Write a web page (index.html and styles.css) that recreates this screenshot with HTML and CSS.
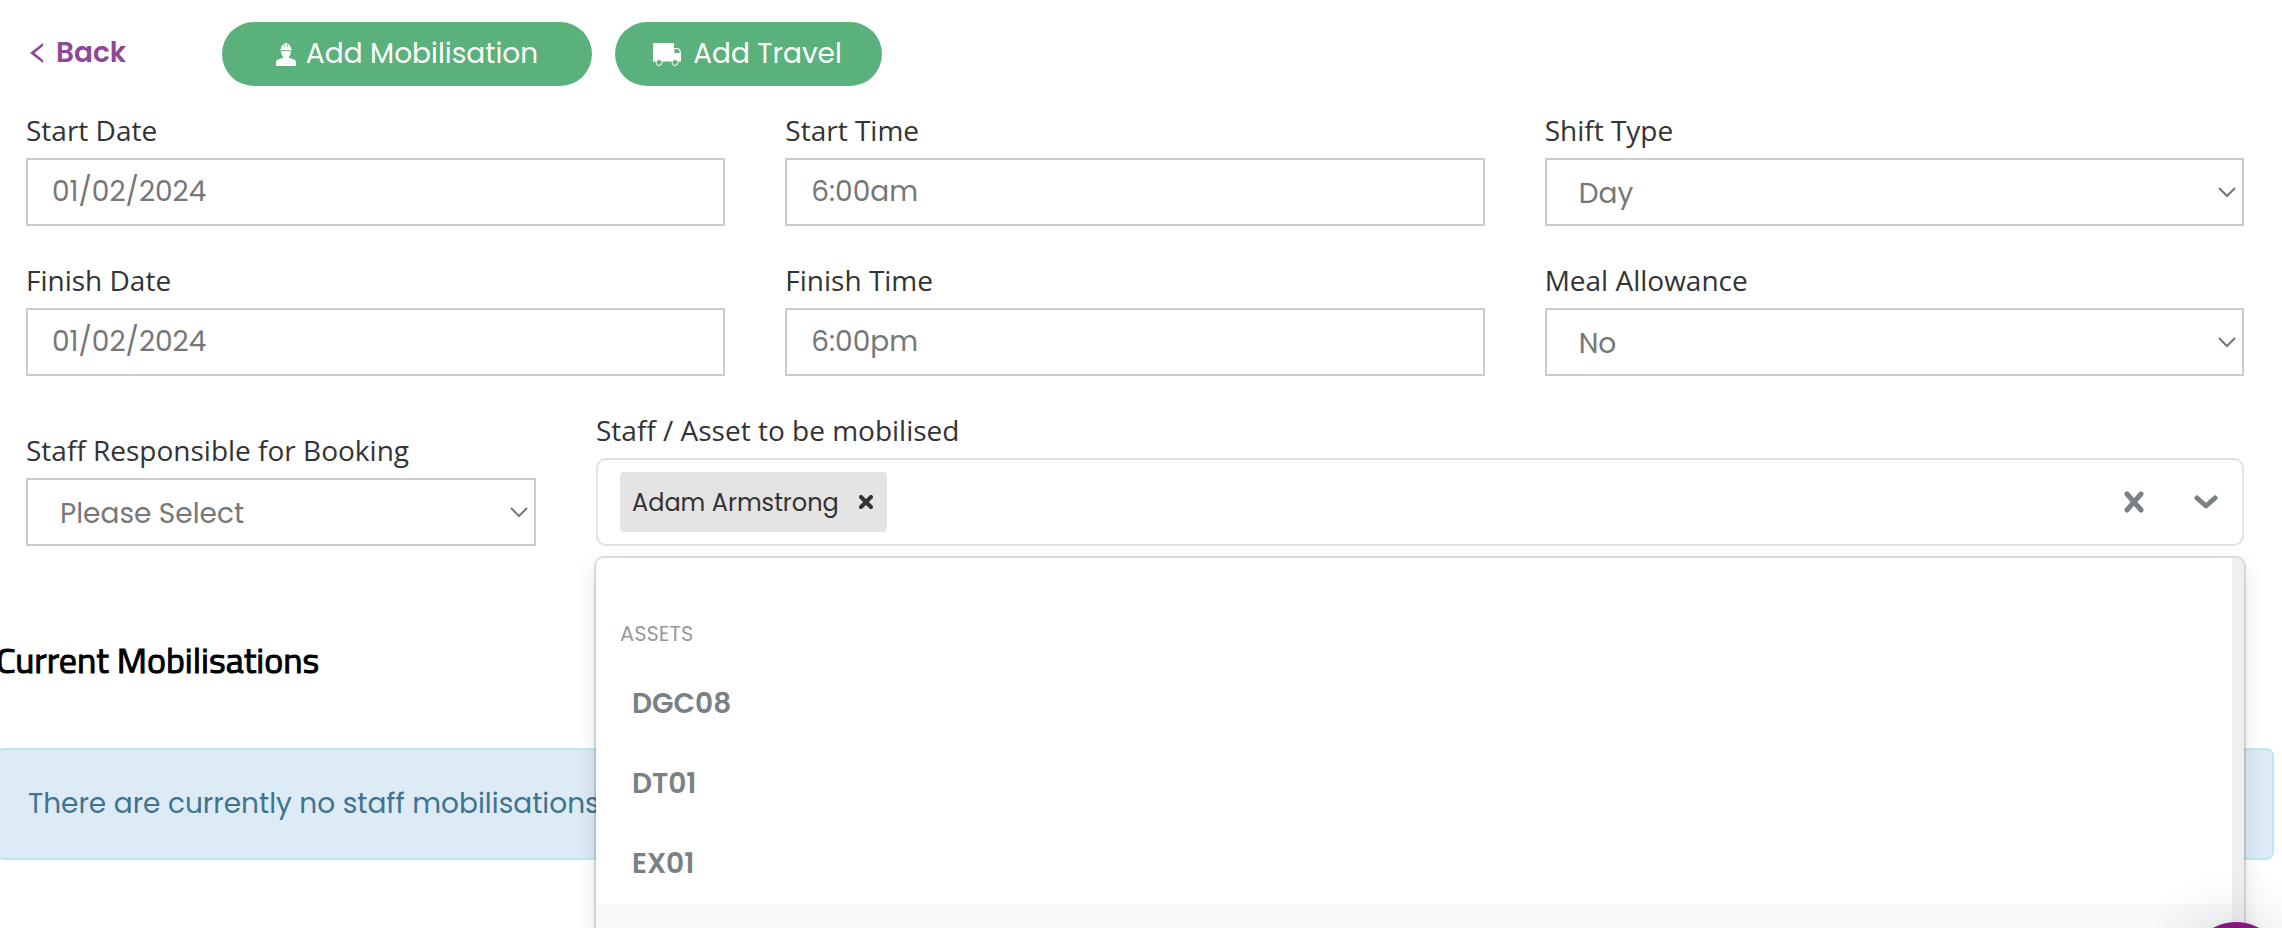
FILE: index.html
```html
<!DOCTYPE html>
<html lang="en">

<head>
  <meta charset="utf-8">
  <meta name="viewport" content="width=device-width, initial-scale=1">
  <title>Mobilisations</title>
  <link rel="stylesheet" href="styles.css">
</head>

<body>

<nav class="toolbar">
  <a href="#" class="back">
    <svg width="14" height="20" viewBox="0 0 14 20"><path d="M13 0v3L4.500 10l8.500 7v3L0 10z" fill="currentColor"/></svg>
    Back
  </a>
  <button type="button" class="btn btn-mobilisation">
    <svg width="20" height="24" viewBox="0 0 20 24" fill="currentColor">
      <path d="M5 7c0-2.500 1.200-4.300 3-5v3h.6V1h2.800v4h.6V2c1.800.7 3 2.500 3 5h1v1.300H4V7z"/>
      <path d="M5 9.300h10c-.2 2.500-.8 4-2 5.200v1.300l5 1.700c1.500.6 2 1.500 2 3V24H0v-3.500c0-1.500.5-2.400 2-3l5-1.700v-1.300C5.800 13.300 5.200 11.800 5 9.300z"/>
    </svg>
    Add Mobilisation
  </button>
  <button type="button" class="btn btn-travel">
    <svg width="28" height="24" viewBox="0 0 28 24">
      <path d="M0 1h21v5h3c2.500 0 4 2 4 5v8.500H0z" fill="currentColor"/>
      <path d="M21.500 7H24c1.500 0 2.600 1.500 2.800 4h-5.300z" fill="#5ab17b"/>
      <circle cx="6" cy="20.500" r="3" fill="#5ab17b" stroke="currentColor"/>
      <circle cx="22" cy="20.500" r="3" fill="#5ab17b" stroke="currentColor"/>
    </svg>
    Add Travel
  </button>
</nav>

<form class="booking">
  <div class="row">
    <div class="field">
      <label for="start-date">Start Date</label>
      <input type="text" id="start-date" value="01/02/2024">
    </div>
    <div class="field">
      <label for="start-time">Start Time</label>
      <input type="text" id="start-time" value="6:00am">
    </div>
    <div class="field">
      <label for="shift-type">Shift Type</label>
      <select id="shift-type"><option>Day</option></select>
    </div>
    <div class="field">
      <label for="finish-date">Finish Date</label>
      <input type="text" id="finish-date" value="01/02/2024">
    </div>
    <div class="field">
      <label for="finish-time">Finish Time</label>
      <input type="text" id="finish-time" value="6:00pm">
    </div>
    <div class="field">
      <label for="meal">Meal Allowance</label>
      <select id="meal"><option>No</option></select>
    </div>
  </div>

  <div class="staff-row">
    <div class="field">
      <label for="responsible">Staff Responsible for Booking</label>
      <select id="responsible"><option>Please Select</option></select>
    </div>
    <div class="field">
      <label for="mobilised">Staff / Asset to be mobilised</label>
      <div class="multi">
        <div class="control">
          <div class="chip">
            Adam Armstrong
            <button type="button" aria-label="Remove Adam Armstrong">
              <svg width="14" height="14" viewBox="0 0 14 14"><path d="m2 2 10 10M12 2 2 12" stroke="currentColor" stroke-width="4" stroke-linecap="round"/></svg>
            </button>
          </div>
          <input type="text" id="mobilised">
          <button type="button" class="clear" aria-label="Clear">
            <svg width="20" height="22" viewBox="0 0 20 22"><path d="m3 3 14 16M17 3 3 19" stroke="currentColor" stroke-width="5" stroke-linecap="round"/></svg>
          </button>
          <button type="button" class="toggle" aria-label="Toggle list">
            <svg width="24" height="16" viewBox="0 0 24 16"><path d="m3 4 9 8 9-8" fill="none" stroke="currentColor" stroke-width="5" stroke-linecap="round" stroke-linejoin="round"/></svg>
          </button>
        </div>
        <div class="menu">
          <div class="group">ASSETS</div>
          <ul>
            <li>DGC08</li>
            <li>DT01</li>
            <li>EX01</li>
            <li class="active"></li>
          </ul>
        </div>
      </div>
    </div>
  </div>
</form>

<section class="current">
  <h2>Current Mobilisations</h2>
  <div class="alert">There are currently no staff mobilisations</div>
</section>

<button type="button" class="chat" aria-label="Open chat"></button>

</body>
</html>
```

FILE: styles.css
```css
* {
  box-sizing: border-box;
}

html {
  height: 100%;
}

body {
  height: 100%;
  margin: 0;
  overflow: hidden;
  background: #fff;
  color: #333;
  font-family: Poppins, Inter, sans-serif;
  font-size: 28px;
}

button,
input,
select {
  font: inherit;
}

button {
  border: 0;
  padding: 0;
  background: none;
  cursor: pointer;
}

/* toolbar */
.toolbar {
  display: flex;
  padding: 22px 30px 0;
}

.back {
  display: flex;
  align-items: center;
  gap: 12px;
  width: 192px;
  height: 62px;
  color: #8c4896;
  font-weight: 600;
  text-decoration: none;
}

.btn {
  display: flex;
  align-items: center;
  justify-content: center;
  gap: 10px;
  height: 64px;
  margin-right: 23px;
  border-radius: 32px;
  background: #5ab17b;
  color: #fff;
}

.btn-mobilisation {
  width: 370px;
}

.btn-travel {
  gap: 12px;
  width: 267px;
  padding-right: 2px;
}

/* form */
.booking {
  padding: 26px 38px 0 26px;
}

.row {
  display: grid;
  grid-template-columns: repeat(3, 1fr);
  gap: 36px 60px;
}

.staff-row {
  display: grid;
  grid-template-columns: 510px 1fr;
  align-items: end;
  gap: 60px;
  margin-top: 36px;
}

.field label {
  display: block;
  height: 46px;
  font-family: "Open Sans", sans-serif;
  line-height: 36px;
}

.field > input,
.field > select {
  display: block;
  width: 100%;
  height: 68px;
  border: 2px solid #ccc;
  border-radius: 0;
  background: #fff;
  color: #777;
}

.field > input {
  padding: 0 24px;
}

.field > select {
  appearance: none;
  padding: 2px 32px 0;
  background: #fff url("data:image/svg+xml,%3Csvg xmlns='http://www.w3.org/2000/svg' width='18' height='11'%3E%3Cpath d='m1 1 8 8 8-8' fill='none' stroke='%23777' stroke-width='2'/%3E%3C/svg%3E") no-repeat right 6px center;
}

/* multi select */
.multi {
  position: relative;
}

.control {
  display: flex;
  align-items: center;
  height: 88px;
  padding: 0 24px 0 22px;
  border: 2px solid #dee2e6;
  border-radius: 10px;
  background: #fff;
}

.chip {
  display: flex;
  align-items: center;
  gap: 20px;
  height: 60px;
  padding: 0 14px 0 12px;
  border-radius: 4px;
  background: #e4e4e4;
  font-size: 24px;
}

.chip button {
  display: flex;
  color: #333;
}

.control input {
  flex: 1;
  min-width: 0;
  border: 0;
  outline: 0;
  background: none;
}

.clear,
.toggle {
  display: flex;
  color: #798184;
}

.toggle {
  margin-left: 50px;
}

.menu {
  position: absolute;
  top: 100px;
  left: 0;
  right: 0;
  z-index: 1;
  height: 600px;
  padding-top: 50px;
  border-right: 12px solid #efefef;
  border-radius: 8px;
  background: #fff;
  box-shadow: 0 0 0 2px rgba(0, 0, 0, .12), 0 8px 22px rgba(0, 0, 0, .12);
}

.group {
  height: 56px;
  padding: 0 24px;
  color: #999;
  font-size: 21px;
  line-height: 52px;
}

.menu ul {
  margin: 0;
  padding: 0;
  list-style: none;
}

.menu li {
  height: 80px;
  padding: 0 36px;
  color: #798184;
  font-weight: 600;
  line-height: 80px;
}

.menu .active {
  background: #f8f9fb;
}

/* current mobilisations */
.current {
  margin: 90px 8px 0 -4px;
}

h2 {
  margin: 0 0 64px;
  color: #000;
  font-family: "Titillium Web", "Noto Sans", sans-serif;
  font-size: 36px;
  font-weight: 400;
  line-height: 48px;
  -webkit-text-stroke: 1px #000;
}

.alert {
  height: 112px;
  padding: 0 30px;
  border: 2px solid #bfe6ee;
  border-radius: 8px;
  background: #ddebf6;
  color: #40738f;
  line-height: 108px;
}

.chat {
  position: fixed;
  right: -2px;
  bottom: -90px;
  z-index: 2;
  width: 96px;
  height: 96px;
  border-radius: 50%;
  background: #84187f;
  box-shadow: 0 2px 64px rgba(0, 0, 0, .16), 0 2px 12px rgba(0, 0, 0, .06);
}
```
